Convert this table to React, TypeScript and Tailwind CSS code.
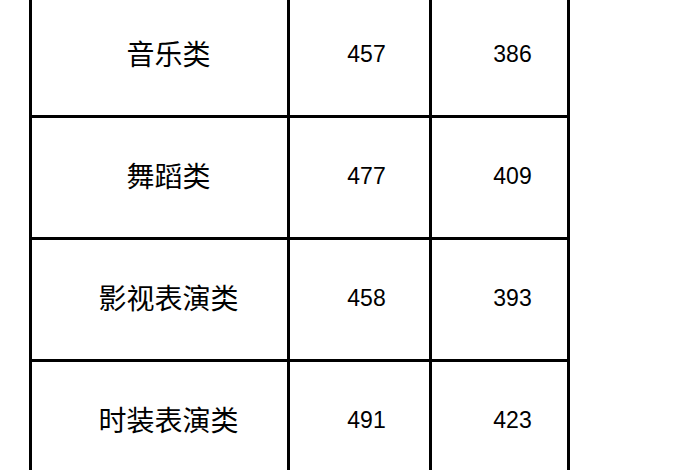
const rows = [
  { name: '音乐类', a: '457', b: '386' },
  { name: '舞蹈类', a: '477', b: '409' },
  { name: '影视表演类', a: '458', b: '393' },
  { name: '时装表演类', a: '491', b: '423' },
]

export default function App() {
  return (
    <div className="h-[470px] w-[700px] overflow-hidden bg-white">
      <div className="-mt-[7px] ml-[29px] grid w-[541px] grid-cols-[258px_142px_138px] border-l-[3px] border-t-[3px] border-black">
        {rows.map((row) => (
          <div key={row.name} className="contents">
            <div className="flex h-[122px] items-center justify-center border-b-[3px] border-r-[3px] border-black pb-[5px] pl-[18px] text-[28px] text-black [font-family:'Noto_Sans_CJK_SC',sans-serif]">
              {row.name}
            </div>
            <div className="flex h-[122px] items-center justify-center border-b-[3px] border-r-[3px] border-black pb-[2px] pl-[14px] text-[23px] text-black [font-family:'Liberation_Sans',Arial,sans-serif]">
              {row.a}
            </div>
            <div className="flex h-[122px] items-center justify-center border-b-[3px] border-r-[3px] border-black pb-[2px] pl-[26px] text-[23px] text-black [font-family:'Liberation_Sans',Arial,sans-serif]">
              {row.b}
            </div>
          </div>
        ))}
      </div>
    </div>
  )
}
